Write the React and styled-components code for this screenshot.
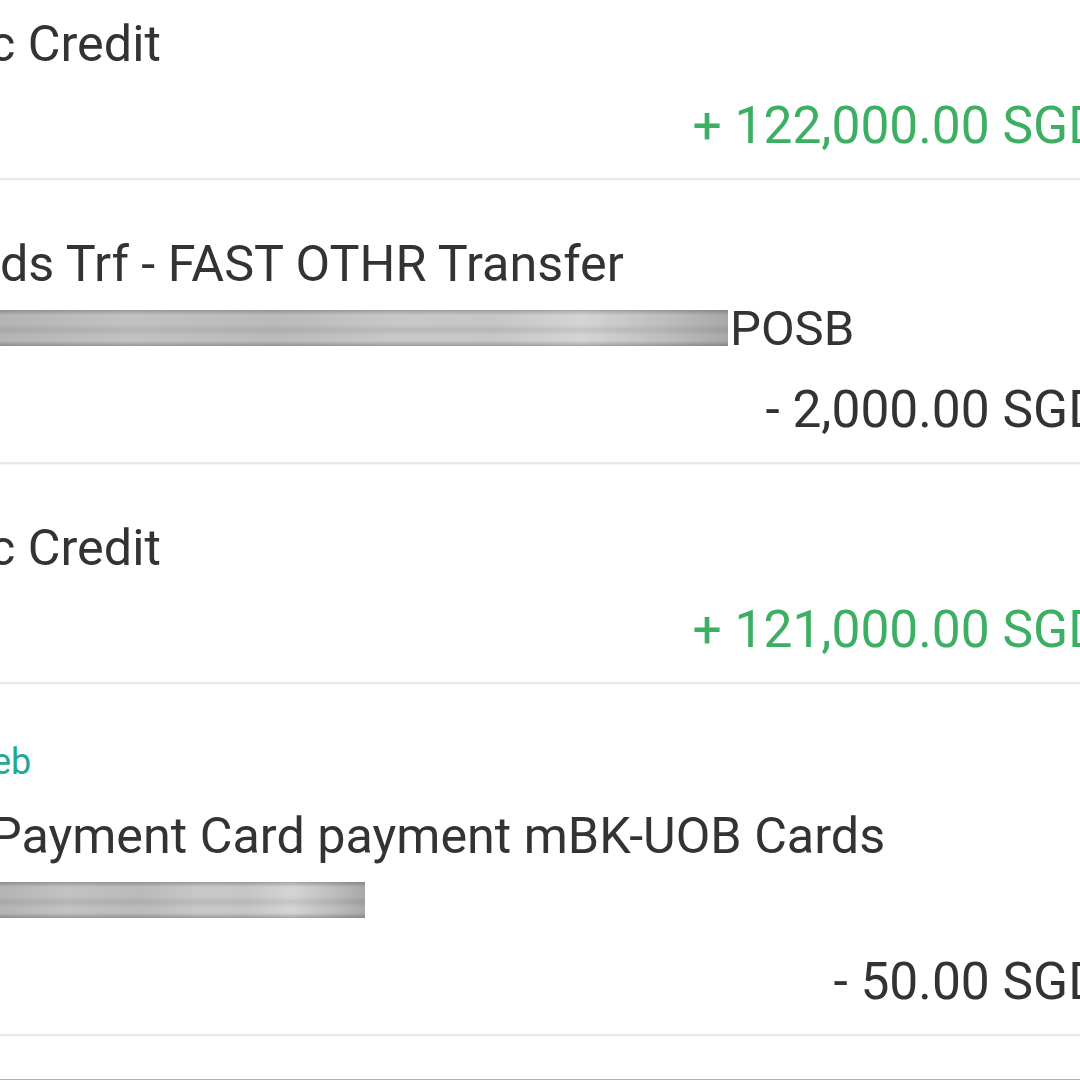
import React from 'react'
import styled, { createGlobalStyle } from 'styled-components'

const Global = createGlobalStyle`
  html, body { margin: 0; padding: 0; background: #fff; }
  body { font-family: Roboto, "Noto Sans", "Liberation Sans", sans-serif; overflow: hidden; }
`

const Page = styled.div`
  width: 1080px;
  height: 1080px;
  overflow: hidden;
  background: #fff;
`

const List = styled.div`
  margin-top: -40px;
  display: flex;
  flex-direction: column;
`

const Row = styled.div`
  display: flex;
  flex-direction: column;
  padding: 52px 0 20px;
  border-bottom: 2px solid #e8e8e8;
  box-shadow: 0 1px 1px rgba(0, 0, 0, 0.03);
`

const Tag = styled.div`
  margin-left: ${p => p.$shift || 0}px;
  margin-bottom: 16px;
  font-size: 36px;
  line-height: 52px;
  color: #1fa99a;
  white-space: nowrap;
`

const Title = styled.div`
  margin-left: ${p => p.$shift || 0}px;
  font-size: 50.3px;
  line-height: 64px;
  color: #333;
  white-space: nowrap;
`

const Detail = styled.div`
  display: flex;
  align-items: center;
  height: 64px;
  font-size: 49px;
  color: #333;
  white-space: nowrap;
`

// smudged account number
const Masked = styled.span`
  flex: none;
  width: ${p => p.$w}px;
  height: 36px;
  margin-right: 2px;
  background:
    linear-gradient(180deg, rgba(0,0,0,0.22) 0%, rgba(0,0,0,0) 14%, rgba(0,0,0,0) 40%,
      rgba(0,0,0,0.08) 55%, rgba(0,0,0,0) 70%, rgba(0,0,0,0) 86%, rgba(0,0,0,0.22) 100%),
    linear-gradient(90deg, #b4b4b4 0%, #c2c2c2 18%, #bababa 38%, #c8c8c8 55%,
      #c6c6c6 68%, #d4d4d4 80%, #bcbcbc 92%, #a8a8a8 100%);
`

const Amount = styled.div`
  align-self: flex-end;
  margin-top: 18px;
  margin-right: -22px;
  font-size: 51.5px;
  line-height: 64px;
  color: ${p => (p.$credit ? '#3daf63' : '#333')};
  white-space: nowrap;
`

const Footer = styled.div`
  height: 43px;
  border-bottom: 2px solid #b3b3b3;
`

const rows = [
  { title: 'c Credit', shift: -11, amount: '+ 122,000.00 SGD', credit: true },
  { title: 'ds Trf - FAST OTHR Transfer', shift: 0, masked: 728, tail: 'POSB', amount: '- 2,000.00 SGD' },
  { title: 'c Credit', shift: -11, amount: '+ 121,000.00 SGD', credit: true },
  { tag: 'eb', title: 'Payment Card payment mBK-UOB Cards', shift: -10, masked: 365, amount: '- 50.00 SGD' },
]

export default function App() {
  return (
    <Page>
      <Global />
      <List>
        {rows.map((r, i) => (
          <Row key={i}>
            {r.tag && <Tag $shift={-8}>{r.tag}</Tag>}
            <Title $shift={r.shift}>{r.title}</Title>
            {r.masked && (
              <Detail>
                <Masked $w={r.masked} />
                {r.tail}
              </Detail>
            )}
            <Amount $credit={r.credit}>{r.amount}</Amount>
          </Row>
        ))}
        <Footer />
      </List>
    </Page>
  )
}
